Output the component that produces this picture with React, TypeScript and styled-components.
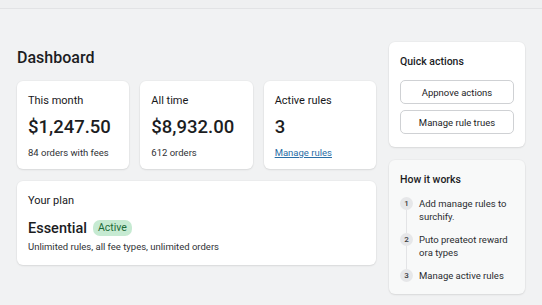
import React from 'react';
import styled, { createGlobalStyle } from 'styled-components';

const GlobalStyle = createGlobalStyle`
  html, body {
    margin: 0;
    padding: 0;
    background: #f1f2f3;
    font-family: Roboto, "Liberation Sans", Arial, sans-serif;
    color: #1c1d1f;
  }
  * { box-sizing: border-box; }
`;

const TopBar = styled.div`
  height: 9px;
  background: #eff0f1;
  border-bottom: 1px solid #e2e3e5;
`;

const Page = styled.div`
  display: grid;
  grid-template-columns: 359px 136px;
  column-gap: 13px;
  padding: 33px 17px 11px 17px;
  align-items: start;
`;

const Main = styled.div`
  display: flex;
  flex-direction: column;
`;

const Title = styled.h1`
  margin: 6px 0 13px 0;
  font-size: 16px;
  line-height: 20px;
  font-weight: 500;
`;

const Card = styled.div<{ $muted?: boolean }>`
  background: ${(p) => (p.$muted ? '#f8f9f9' : '#ffffff')};
  border-radius: 6px;
  box-shadow: 0 1px 2px rgba(0, 0, 0, 0.09), 0 0 0 1px rgba(0, 0, 0, 0.02);
  padding: 13px 11px 11px 11px;
`;

const StatRow = styled.div`
  display: grid;
  grid-template-columns: repeat(3, 1fr);
  gap: 11px;
  margin-bottom: 12px;
`;

const StatCard = styled(Card)`
  height: 88px;
`;

const Label = styled.div`
  font-size: 11px;
  line-height: 14px;
  font-weight: 400;
  color: #17181a;
`;

const Value = styled.div`
  font-size: 18.5px;
  line-height: 24px;
  font-weight: 500;
  margin-top: 7px;
`;

const Sub = styled.div`
  font-size: 9.5px;
  line-height: 13px;
  color: #303236;
  margin-top: 7px;
`;

const SubLink = styled.a`
  display: block;
  font-size: 9.5px;
  line-height: 13px;
  color: #2a6ea6;
  text-decoration: underline;
  margin-top: 7px;
`;

const PlanCard = styled(Card)`
  height: 84px;
`;

const PlanRow = styled.div`
  display: flex;
  align-items: center;
  gap: 6px;
  margin-top: 10px;
  height: 20px;
`;

const PlanName = styled.span`
  font-size: 14.5px;
  font-weight: 500;
`;

const Badge = styled.span`
  background: #c6ead2;
  color: #1d6a38;
  font-size: 10.5px;
  line-height: 16px;
  padding: 0 5px;
  border-radius: 7px;
`;

const PlanDesc = styled.div`
  font-size: 9.5px;
  line-height: 13px;
  color: #303236;
  margin-top: 2px;
`;

const Side = styled.div`
  display: flex;
  flex-direction: column;
  gap: 13px;
`;

const SideTitle = styled.div`
  font-size: 10.5px;
  line-height: 14px;
  font-weight: 500;
`;

const Actions = styled(Card)`
  height: 105px;
`;

const ActionButton = styled.button`
  display: block;
  width: 100%;
  height: 24px;
  margin-top: 6px;
  border: 1px solid #cfd1d4;
  background: #ffffff;
  border-radius: 5px;
  font-family: inherit;
  font-size: 9.5px;
  color: #1c1d1f;
  font-weight: 400;
  &:first-of-type {
    margin-top: 11px;
  }
`;

const HowCard = styled(Card)`
  height: 134px;
`;

const Steps = styled.ol`
  list-style: none;
  margin: 10px 0 0 0;
  padding: 0;
`;

const Step = styled.li`
  display: flex;
  gap: 6px;
  position: relative;
  font-size: 9.5px;
  line-height: 13px;
  color: #2a2c30;
  min-height: 36px;
  &:last-child {
    min-height: 0;
  }
  &:not(:last-child)::after {
    content: '';
    position: absolute;
    left: 6px;
    top: 13px;
    bottom: 0;
    width: 1px;
    background: #e3e4e6;
  }
`;

const StepNum = styled.span`
  flex: none;
  width: 13px;
  height: 13px;
  border-radius: 50%;
  background: #e6e7e9;
  font-size: 8px;
  line-height: 13px;
  text-align: center;
  font-weight: 500;
  color: #3a3c40;
`;

const steps = ['Add manage rules to surchify.', 'Puto preateot reward or\u0430 types', 'Manage active rules'];

export default function App() {
  return (
    <>
      <GlobalStyle />
      <TopBar />
      <Page>
        <Main>
          <Title>Dashboard</Title>
          <StatRow>
            <StatCard>
              <Label>This month</Label>
              <Value>$1,247.50</Value>
              <Sub>84 orders with fees</Sub>
            </StatCard>
            <StatCard>
              <Label>All time</Label>
              <Value>$8,932.00</Value>
              <Sub>612 orders</Sub>
            </StatCard>
            <StatCard>
              <Label>Active rules</Label>
              <Value>3</Value>
              <SubLink href="#">Manage rules</SubLink>
            </StatCard>
          </StatRow>
          <PlanCard>
            <Label>Your plan</Label>
            <PlanRow>
              <PlanName>Essential</PlanName>
              <Badge>Active</Badge>
            </PlanRow>
            <PlanDesc>Unlimited rules, all fee types, unlimited orders</PlanDesc>
          </PlanCard>
        </Main>
        <Side>
          <Actions>
            <SideTitle>Quick actions</SideTitle>
            <ActionButton>Appnove actions</ActionButton>
            <ActionButton>Manage rule trues</ActionButton>
          </Actions>
          <HowCard $muted>
            <SideTitle>How it works</SideTitle>
            <Steps>
              {steps.map((s, i) => (
                <Step key={s}>
                  <StepNum>{i + 1}</StepNum>
                  <span>{s}</span>
                </Step>
              ))}
            </Steps>
          </HowCard>
        </Side>
      </Page>
    </>
  );
}
